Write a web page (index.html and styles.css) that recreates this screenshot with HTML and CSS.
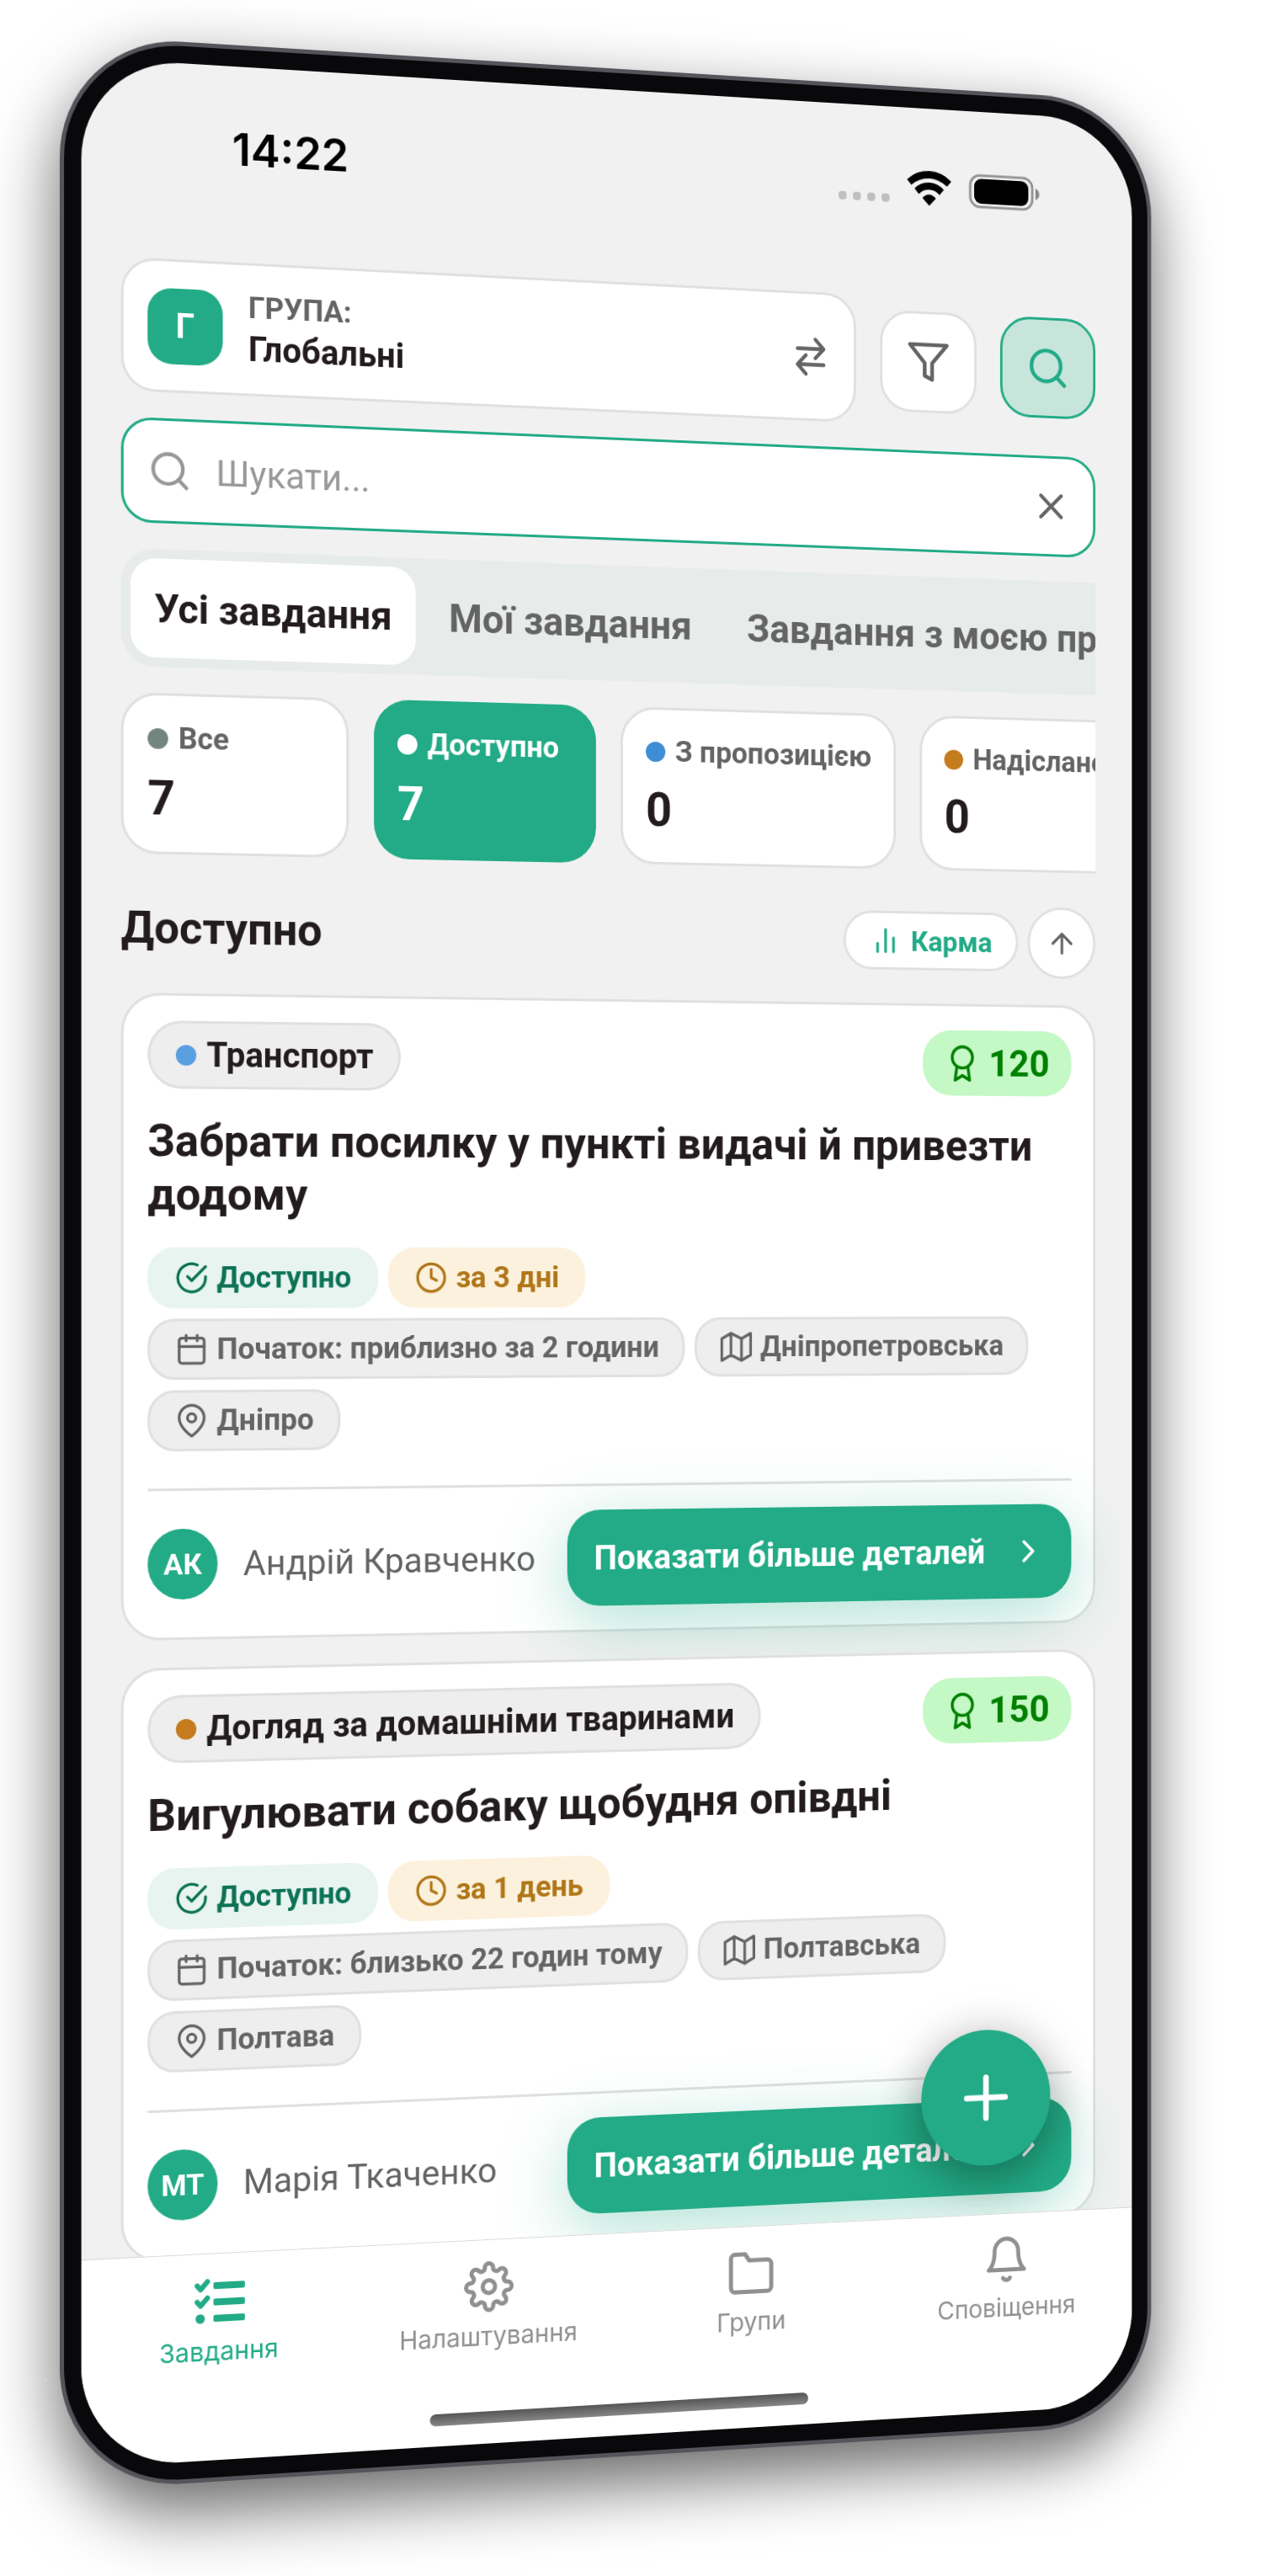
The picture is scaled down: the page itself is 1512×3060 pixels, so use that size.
FILE: index.html
```html
<!DOCTYPE html>
<html lang="uk">
<head>
  <meta charset="UTF-8">
  <meta name="viewport" content="width=device-width, initial-scale=1">
  <title>Завдання</title>
  <link rel="stylesheet" href="styles.css">
</head>
<body>

<!-- Icons -->
<svg class="sprite" aria-hidden="true">
  <symbol id="i-search" viewBox="0 0 24 24"><circle cx="11" cy="11" r="8"/><path d="M21 21l-4.35-4.35"/></symbol>
  <symbol id="i-filter" viewBox="0 0 24 24"><path d="M22 3H2l8 9.46V19l4 2v-8.54L22 3z"/></symbol>
  <symbol id="i-swap" viewBox="0 0 24 24"><path d="M4.5 7.6h15M14.7 2.4l4.8 5.2-4.8 5.2M19.5 16.4h-15M9.3 11.2l-4.8 5.2 4.8 5.2"/></symbol>
  <symbol id="i-x" viewBox="0 0 24 24"><path d="M18 6L6 18M6 6l12 12"/></symbol>
  <symbol id="i-bars" viewBox="0 0 24 24"><path d="M18 20V10M12 20V4M6 20v-6"/></symbol>
  <symbol id="i-up" viewBox="0 0 24 24"><path d="M12 19V5M5 12l7-7 7 7"/></symbol>
  <symbol id="i-award" viewBox="0 0 24 24"><circle cx="12" cy="8" r="7"/><path d="M8.21 13.89L7 23l5-3 5 3-1.21-9.12"/></symbol>
  <symbol id="i-check" viewBox="0 0 24 24"><path d="M22 11.08V12a10 10 0 1 1-5.93-9.14"/><path d="M22 4L12 14.01l-3-3"/></symbol>
  <symbol id="i-clock" viewBox="0 0 24 24"><circle cx="12" cy="12" r="10"/><path d="M12 6v6l4 2"/></symbol>
  <symbol id="i-calendar" viewBox="0 0 24 24"><rect x="3" y="4" width="18" height="18" rx="2"/><path d="M16 2v4M8 2v4M3 10h18"/></symbol>
  <symbol id="i-map" viewBox="0 0 24 24"><path d="M1 6v16l7-4 8 4 7-4V2l-7 4-8-4-7 4zM8 2v16M16 6v16"/></symbol>
  <symbol id="i-pin" viewBox="0 0 24 24"><path d="M21 10c0 7-9 13-9 13s-9-6-9-13a9 9 0 0 1 18 0z"/><circle cx="12" cy="10" r="3"/></symbol>
  <symbol id="i-right" viewBox="0 0 24 24"><path d="M9 18l6-6-6-6"/></symbol>
  <symbol id="i-plus" viewBox="0 0 24 24"><path d="M12 5v14M5 12h14"/></symbol>
  <symbol id="i-folder" viewBox="0 0 24 24"><path d="M22 19a2 2 0 0 1-2 2H4a2 2 0 0 1-2-2V5a2 2 0 0 1 2-2h5l2 3h9a2 2 0 0 1 2 2z"/></symbol>
  <symbol id="i-bell" viewBox="0 0 24 24"><path d="M18 8A6 6 0 0 0 6 8c0 7-3 9-3 9h18s-3-2-3-9M13.73 21a2 2 0 0 1-3.46 0"/></symbol>
  <symbol id="i-gear" viewBox="0 0 24 24"><circle cx="12" cy="12" r="3"/><path d="M19.4 15a1.65 1.65 0 0 0 .33 1.82l.06.06a2 2 0 0 1 0 2.83 2 2 0 0 1-2.83 0l-.06-.06a1.65 1.65 0 0 0-1.82-.33 1.65 1.65 0 0 0-1 1.51V21a2 2 0 0 1-2 2 2 2 0 0 1-2-2v-.09A1.65 1.65 0 0 0 9 19.4a1.65 1.65 0 0 0-1.82.33l-.06.06a2 2 0 0 1-2.83 0 2 2 0 0 1 0-2.83l.06-.06a1.65 1.65 0 0 0 .33-1.82 1.65 1.65 0 0 0-1.51-1H3a2 2 0 0 1-2-2 2 2 0 0 1 2-2h.09A1.65 1.65 0 0 0 4.6 9a1.65 1.65 0 0 0-.33-1.82l-.06-.06a2 2 0 0 1 0-2.83 2 2 0 0 1 2.83 0l.06.06a1.65 1.65 0 0 0 1.82.33H9a1.65 1.65 0 0 0 1-1.51V3a2 2 0 0 1 2-2 2 2 0 0 1 2 2v.09a1.65 1.65 0 0 0 1 1.51 1.65 1.65 0 0 0 1.82-.33l.06-.06a2 2 0 0 1 2.83 0 2 2 0 0 1 0 2.83l-.06.06a1.65 1.65 0 0 0-.33 1.82V9a1.65 1.65 0 0 0 1.51 1H21a2 2 0 0 1 2 2 2 2 0 0 1-2 2h-.09a1.65 1.65 0 0 0-1.51 1z"/></symbol>
</svg>

<div class="phone">
  <div class="screen">

    <main class="content">
      <!-- Status bar -->
      <div class="status-bar">
        <time class="clock">14:22</time>
        <div class="signals">
          <div class="cell"><i></i><i></i><i></i><i></i></div>
          <svg class="wifi" viewBox="0 0 56 42" aria-hidden="true">
            <path d="M0 11.5Q12 0 28 0t28 11.5l-5.5 6.2Q40 9 28 9T5.5 17.7z"/>
            <path d="M9.5 22Q17 14 28 14t18.5 8l-5.5 6.5Q36 22.5 28 22.5t-13 6z"/>
            <path d="M19.5 33Q23 28.5 28 28.5T36.5 33L28 42z"/>
          </svg>
          <svg class="battery" viewBox="0 0 90 42" aria-hidden="true">
            <rect class="shell" x="2" y="2" width="79" height="38" rx="12"/>
            <rect x="7" y="6" width="69" height="30" rx="9"/>
            <path class="nub" d="M85 14q5 2 5 7t-5 7z"/>
          </svg>
        </div>
      </div>

      <!-- Group and search -->
      <div class="toolbar">
        <button class="group" type="button">
          <span class="group-tile">Г</span>
          <span class="group-text">
            <span class="group-label">ГРУПА:</span>
            <span class="group-name">Глобальні</span>
          </span>
          <svg class="icon icon-md"><use href="#i-swap"/></svg>
        </button>
        <button class="tool" type="button" aria-label="Фільтр"><svg class="icon icon-lg"><use href="#i-filter"/></svg></button>
        <button class="tool active" type="button" aria-label="Пошук"><svg class="icon icon-lg"><use href="#i-search"/></svg></button>
      </div>

      <div class="search">
        <svg class="icon icon-md"><use href="#i-search"/></svg>
        <input type="text" placeholder="Шукати..." aria-label="Шукати">
        <button type="button" aria-label="Очистити"><svg class="icon icon-md"><use href="#i-x"/></svg></button>
      </div>

      <div class="tabs">
        <button class="tab active" type="button">Усі завдання</button>
        <button class="tab" type="button">Мої завдання</button>
        <button class="tab" type="button">Завдання з моєю пропозицією</button>
      </div>

      <div class="stats">
        <button class="stat" type="button"><span class="stat-label"><i class="dot grey"></i>Все</span><span class="stat-value">7</span></button>
        <button class="stat active" type="button"><span class="stat-label"><i class="dot white"></i>Доступно</span><span class="stat-value">7</span></button>
        <button class="stat" type="button"><span class="stat-label"><i class="dot blue"></i>З пропозицією</span><span class="stat-value">0</span></button>
        <button class="stat" type="button"><span class="stat-label"><i class="dot orange"></i>Надіслано</span><span class="stat-value">0</span></button>
      </div>

      <div class="list-head">
        <h1>Доступно</h1>
        <button class="sort" type="button"><svg class="icon icon-sm"><use href="#i-bars"/></svg>Карма</button>
        <button class="order" type="button" aria-label="За зростанням"><svg class="icon icon-sm"><use href="#i-up"/></svg></button>
      </div>

      <!-- Task cards -->
      <div class="cards">
        <article class="card">
          <div class="card-top">
            <span class="category"><i class="dot sky"></i>Транспорт</span>
            <span class="points"><svg class="icon"><use href="#i-award"/></svg>120</span>
          </div>
          <h2>Забрати посилку у пункті видачі й привезти додому</h2>
          <div class="chips">
            <span class="chip available"><svg class="icon"><use href="#i-check"/></svg>Доступно</span>
            <span class="chip due"><svg class="icon"><use href="#i-clock"/></svg>за 3 дні</span>
            <span class="chip"><svg class="icon"><use href="#i-calendar"/></svg>Початок: приблизно за 2 години</span>
            <span class="chip"><svg class="icon"><use href="#i-map"/></svg>Дніпропетровська</span>
            <span class="chip"><svg class="icon"><use href="#i-pin"/></svg>Дніпро</span>
          </div>
          <div class="card-foot">
            <span class="avatar">АК</span>
            <span class="author">Андрій Кравченко</span>
            <button class="details" type="button">Показати більше деталей<svg class="icon"><use href="#i-right"/></svg></button>
          </div>
        </article>

        <article class="card">
          <div class="card-top">
            <span class="category"><i class="dot orange"></i>Догляд за домашніми тваринами</span>
            <span class="points"><svg class="icon"><use href="#i-award"/></svg>150</span>
          </div>
          <h2>Вигулювати собаку щобудня опівдні</h2>
          <div class="chips">
            <span class="chip available"><svg class="icon"><use href="#i-check"/></svg>Доступно</span>
            <span class="chip due"><svg class="icon"><use href="#i-clock"/></svg>за 1 день</span>
            <span class="chip"><svg class="icon"><use href="#i-calendar"/></svg>Початок: близько 22 годин тому</span>
            <span class="chip"><svg class="icon"><use href="#i-map"/></svg>Полтавська</span>
            <span class="chip"><svg class="icon"><use href="#i-pin"/></svg>Полтава</span>
          </div>
          <div class="card-foot">
            <span class="avatar">МТ</span>
            <span class="author">Марія Ткаченко</span>
            <button class="details" type="button">Показати більше деталей<svg class="icon"><use href="#i-right"/></svg></button>
          </div>
        </article>
      </div>

      <button class="fab" type="button" aria-label="Додати завдання"><svg class="icon"><use href="#i-plus"/></svg></button>
    </main>

    <!-- Bottom navigation -->
    <footer class="bottom">
      <nav class="nav">
        <a class="nav-item active" href="#tasks">
          <svg class="nav-tasks" viewBox="0 0 60 60" aria-hidden="true">
            <path class="tick" d="M4 11.5l4 4.5 8-9M4 30.5l4 4.5 8-9"/>
            <circle cx="7.5" cy="50" r="5.5"/>
            <rect x="23" y="8" width="37" height="8" rx="2"/>
            <rect x="23" y="27" width="37" height="8" rx="2"/>
            <rect x="23" y="46" width="37" height="8" rx="2"/>
          </svg>
          Завдання
        </a>
        <a class="nav-item" href="#settings"><svg class="icon"><use href="#i-gear"/></svg>Налаштування</a>
        <a class="nav-item" href="#groups"><svg class="icon"><use href="#i-folder"/></svg>Групи</a>
        <a class="nav-item" href="#notices"><svg class="icon"><use href="#i-bell"/></svg>Сповіщення</a>
      </nav>
      <div class="home-bar"></div>
    </footer>

  </div>
</div>

</body>
</html>
```
FILE: styles.css
```css
* {
  box-sizing: border-box;
}

body {
  margin: 0;
  padding: 82px 107px 142px 70px;
  background: #fff;
  color: #231c1d;
  font-family: Roboto, "Noto Sans", sans-serif;
  overflow-x: hidden;
}

button {
  margin: 0;
  padding: 0;
  border: none;
  background: none;
  color: inherit;
  font: inherit;
  text-align: left;
  white-space: nowrap;
  cursor: pointer;
}

.sprite {
  display: none;
}

.icon {
  flex: none;
  fill: none;
  stroke: currentColor;
  stroke-width: 2;
  stroke-linecap: round;
  stroke-linejoin: round;
}

.icon-sm {
  width: 40px;
  height: 40px;
}

.icon-md {
  width: 52px;
  height: 52px;
}

.icon-lg {
  width: 56px;
  height: 56px;
}

/* Phone */
.phone {
  display: grid;
  grid-template-rows: minmax(0, 1fr);
  aspect-ratio: 1335 / 2836;
  padding: 20px;
  border: 5px solid #55545b;
  border-radius: 142px;
  background: #09090b;
  box-shadow: 0 32px 80px rgba(0, 0, 0, 0.6);
  transform: perspective(5700px) rotateY(14deg);
}

.screen {
  display: flex;
  flex-direction: column;
  min-width: 0;
  border-radius: 117px;
  background: #f1f1f1;
  overflow: hidden;
}

.content {
  position: relative;
  flex: 1;
  min-height: 0;
  padding: 0 47px 0 46px;
  overflow: hidden;
}

/* Status bar */
.status-bar {
  display: flex;
  justify-content: space-between;
  align-items: center;
  height: 192px;
  margin-bottom: 36px;
  padding: 0 72px 0 130px;
  color: #000;
}

.clock {
  font: 600 52px Inter, sans-serif;
}

.signals {
  display: flex;
  align-items: center;
  gap: 22px;
}

.cell {
  display: flex;
  gap: 8px;
  padding-top: 28px;
}

.cell i {
  width: 10px;
  height: 10px;
  border-radius: 4px;
  background: #bfbfbf;
}

.wifi {
  width: 56px;
  height: 42px;
}

.battery {
  width: 90px;
  height: 42px;
}

.shell {
  fill: none;
  stroke: #949494;
  stroke-width: 3;
}

.nub {
  fill: #8a8a8a;
}

/* Group and search */
.toolbar {
  display: flex;
  align-items: center;
  gap: 30px;
  margin-bottom: 30px;
}

.group {
  display: flex;
  flex: 1;
  align-items: center;
  gap: 30px;
  height: 155px;
  padding: 0 28px;
  border: 3px solid #e0e0e0;
  border-radius: 40px;
  background: #fff;
}

.group .icon {
  color: #646464;
}

.group-tile {
  display: grid;
  place-items: center;
  width: 88px;
  height: 88px;
  border-radius: 28px;
  background: #22ab86;
  color: #fff;
  font-size: 40px;
  font-weight: 700;
}

.group-text {
  display: grid;
  flex: 1;
}

.group-label {
  color: #646464;
  font-size: 35px;
  font-weight: 700;
  line-height: 46px;
}

.group-name {
  font-size: 40px;
  font-weight: 700;
  line-height: 50px;
}

.tool {
  display: grid;
  place-items: center;
  width: 122px;
  height: 122px;
  border: 3px solid #e0e0e0;
  border-radius: 38px;
  background: #fff;
  color: #646464;
}

.tool.active {
  border-color: #22ab86;
  background: #c8e5dc;
  color: #22ab86;
}

.search {
  display: flex;
  align-items: center;
  gap: 28px;
  height: 122px;
  margin-bottom: 30px;
  padding: 0 28px;
  border: 3px solid #22ab86;
  border-radius: 36px;
  background: #fff;
  color: #999;
}

.search input {
  flex: 1;
  min-width: 0;
  padding: 0;
  border: none;
  outline: none;
  background: none;
  font: 400 42px Roboto, sans-serif;
}

.search input::placeholder {
  color: #999;
  opacity: 1;
}

.search button {
  display: flex;
  color: #646464;
}

/* Tabs */
.tabs {
  display: flex;
  gap: 12px;
  margin-bottom: 30px;
  padding: 11px;
  border-radius: 40px 0 0 40px;
  background: #e7ebea;
  overflow: hidden;
}

.tab {
  flex: none;
  height: 115px;
  padding: 0 28px;
  border-radius: 30px;
  color: #646464;
  font-size: 46px;
  font-weight: 700;
}

.tab.active {
  background: #fff;
  color: #231c1d;
}

/* Counters */
.stats {
  display: flex;
  gap: 30px;
  margin-bottom: 42px;
  overflow: hidden;
}

.stat {
  display: grid;
  flex: none;
  gap: 13px;
  min-width: 268px;
  padding: 28px;
  border: 3px solid #e0e0e0;
  border-radius: 42px;
  background: #fff;
}

.stat-label {
  display: flex;
  align-items: center;
  gap: 12px;
  color: #646464;
  font-size: 35px;
  font-weight: 700;
  line-height: 44px;
}

.stat-value {
  font-size: 56px;
  font-weight: 700;
  line-height: 68px;
}

.stat.active {
  border: none;
  background: #22ab86;
}

.stat.active span {
  color: #fff;
}

.dot {
  width: 24px;
  height: 24px;
  border-radius: 50%;
}

.dot.grey {
  background: #74857e;
}

.dot.white {
  background: #fff;
}

.dot.blue {
  background: #3e8ed6;
}

.dot.sky {
  background: #5a9fe0;
}

.dot.orange {
  background: #c57c1e;
}

/* List head */
.list-head {
  display: flex;
  align-items: center;
  gap: 12px;
  margin-bottom: 32px;
}

.list-head h1 {
  flex: 1;
  margin: 0;
  font-size: 52px;
  font-weight: 700;
}

.sort {
  display: flex;
  align-items: center;
  gap: 12px;
  height: 71px;
  padding: 0 30px;
  border: 3px solid #e0e0e0;
  border-radius: 36px;
  background: #fff;
  color: #22ab86;
  font-size: 34px;
  font-weight: 700;
}

.order {
  display: grid;
  place-items: center;
  width: 87px;
  height: 87px;
  border: 3px solid #e0e0e0;
  border-radius: 50%;
  background: #fff;
  color: #646464;
}

/* Task cards */
.cards {
  display: grid;
  gap: 32px;
}

.card {
  padding: 29px 28px 28px;
  border: 3px solid #e0e0e0;
  border-radius: 46px;
  background: #fff;
}

.card-top {
  display: flex;
  justify-content: space-between;
  align-items: center;
}

.category {
  display: flex;
  align-items: center;
  gap: 12px;
  height: 79px;
  padding: 0 30px;
  border: 3px solid #e0e0e0;
  border-radius: 40px;
  background: #eee;
  font-size: 40px;
  font-weight: 700;
}

.points {
  display: flex;
  align-items: center;
  gap: 12px;
  height: 79px;
  padding: 0 28px;
  border-radius: 36px;
  background: #c4f8c5;
  color: #008000;
  font-size: 45px;
  font-weight: 700;
}

.points .icon {
  width: 44px;
  height: 44px;
}

.card h2 {
  margin: 30px 0;
  font-size: 52px;
  font-weight: 700;
  line-height: 62px;
}

.chips {
  display: flex;
  flex-wrap: wrap;
  gap: 12px;
}

.chip {
  display: flex;
  align-items: center;
  gap: 10px;
  height: 71px;
  padding: 0 29px;
  border: 3px solid #e0e0e0;
  border-radius: 32px;
  background: #eee;
  color: #646464;
  font-size: 35px;
  font-weight: 700;
}

.chip .icon {
  width: 39px;
  height: 39px;
}

.chip.available {
  border-color: #e7f4ef;
  background: #e7f4ef;
  color: #0d7355;
}

.chip.due {
  border-color: #fcf1dc;
  background: #fcf1dc;
  color: #b07719;
}

.card-foot {
  display: flex;
  align-items: center;
  gap: 30px;
  margin-top: 43px;
  padding-top: 28px;
  border-top: 3px solid #e0e0e0;
}

.avatar {
  display: grid;
  place-items: center;
  width: 82px;
  height: 82px;
  border-radius: 50%;
  background: #22ab86;
  color: #fff;
  font-size: 34px;
  font-weight: 700;
}

.author {
  flex: 1;
  color: #646464;
  font-size: 41px;
  white-space: nowrap;
}

.details {
  display: flex;
  align-items: center;
  gap: 32px;
  height: 114px;
  padding: 0 32px;
  border-radius: 40px;
  background: #22ab86;
  box-shadow: 0 20px 80px rgba(34, 171, 134, 0.35);
  color: #fff;
  font-size: 40px;
  font-weight: 700;
}

.details .icon {
  width: 46px;
  height: 46px;
}

/* Add button, over the list */
.fab {
  position: absolute;
  right: 105px;
  bottom: 59px;
  display: grid;
  place-items: center;
  width: 164px;
  height: 164px;
  border-radius: 50%;
  background: #22ab86;
  box-shadow: 0 13px 60px rgba(0, 0, 0, 0.4);
  color: #fff;
}

.fab .icon {
  width: 84px;
  height: 84px;
}

/* Bottom navigation */
.bottom {
  display: flex;
  flex-direction: column;
  justify-content: space-between;
  height: 241px;
  padding-bottom: 24px;
  border-top: 1px solid #d8d8d8;
  background: #fff;
}

.nav {
  display: grid;
  grid-template-columns: repeat(4, 1fr);
  padding-top: 25px;
}

.nav-item {
  display: grid;
  justify-items: center;
  gap: 10px;
  color: #909090;
  font: 400 30px/36px Inter, sans-serif;
  text-decoration: none;
}

.nav-item.active {
  color: #22ab86;
}

.nav-item svg {
  width: 60px;
  height: 60px;
}

.nav-tasks {
  fill: currentColor;
}

.tick {
  fill: none;
  stroke: currentColor;
  stroke-width: 6;
  stroke-linecap: round;
  stroke-linejoin: round;
}

.home-bar {
  align-self: center;
  width: 36%;
  height: 14px;
  border-radius: 7px;
  background: linear-gradient(#555, #868686);
}
```
